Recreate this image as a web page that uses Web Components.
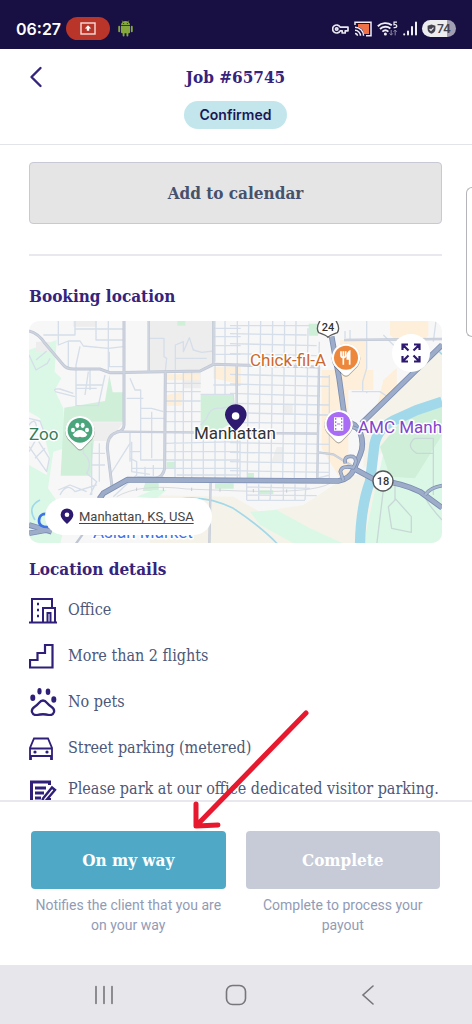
<!DOCTYPE html>
<html lang="en">
<head>
<meta charset="utf-8">
<meta name="viewport" content="width=device-width, initial-scale=1">
<title>Job #65745</title>
<style>
    body {
        margin: 0;
        background: #fff;
    }
</style>
</head>
<body>
<job-screen></job-screen>

<script>
class BaseElement extends HTMLElement {
    constructor() {
        super();
        this.attachShadow({ mode: "open" });
    }

    getTemplate() {
        const template = document.createElement('template');
        template.innerHTML = `
            <style>
                *, *::before, *::after { box-sizing: border-box; }
                svg { display: block; }
                ${this.getStyles()}
            </style>
            ${this.getMarkup()}
        `;

        return template;
    }

    render() {
        this.shadowRoot.appendChild(this.getTemplate().content.cloneNode(true));
    }

    connectedCallback() {
        if (!this.shadowRoot.childElementCount) {
            this.render();
        }
    }
}

class StatusBar extends BaseElement {
    getStyles() {
        return `
            :host {
                display: flex;
                flex: none;
                align-items: center;
                justify-content: space-between;
                height: 49px;
                padding: 8px 16px 0;
                background: #180f42;
                color: #fff;
                font-family: Inter, "Liberation Sans", sans-serif;
            }
            .side { display: flex; align-items: center; gap: 5px; }
            time { font-size: 16px; font-weight: 600; line-height: 24px; }
            .cast {
                display: flex;
                align-items: center;
                justify-content: center;
                width: 44px;
                height: 23px;
                border-radius: 12px;
                background: #b93429;
            }
            .robot { margin-left: 3px; }
            .battery {
                display: flex;
                align-items: center;
                justify-content: center;
                gap: 1px;
                width: 34px;
                height: 17px;
                border-radius: 9px;
                background: linear-gradient(to right, #ededf0 74%, #a19db2 74%);
                color: #454450;
                font-size: 12px;
                font-weight: 600;
            }
        `;
    }

    getMarkup() {
        return `
            <div class="side">
                <time>06:27</time>
                <span class="cast">
                    <svg width="16" height="13" viewBox="0 0 16 13">
                        <rect x="1" y="1" width="14" height="11" fill="none" stroke="#f6dedb" stroke-width="1.4"/>
                        <path d="M8 3.2L11.2 6.6H9.2V8.8H6.8V6.6H4.8Z" fill="#fff"/>
                    </svg>
                </span>
                <svg class="robot" width="15" height="17" viewBox="0 0 15 17" fill="#84a83c">
                    <path d="M3 5.2a4.5 4.2 0 0 1 9 0zM3 6h9v6.3a1 1 0 0 1-1 1H4a1 1 0 0 1-1-1z"/>
                    <path d="M4.2.6l1.2 1.8M10.8.6L9.6 2.4" stroke="#84a83c" stroke-width=".8"/>
                    <path d="M1.2 6.8v4.4M13.8 6.8v4.4M5.6 12.5v3M9.4 12.5v3" stroke="#84a83c" stroke-width="1.9" stroke-linecap="round"/>
                    <circle cx="5.7" cy="3.4" r=".5" fill="#180f42"/><circle cx="9.3" cy="3.4" r=".5" fill="#180f42"/>
                </svg>
            </div>
            <div class="side">
                <svg width="17" height="12" viewBox="0 0 17 12" fill="none" stroke="#e8e6ef" stroke-width="1.7" stroke-linejoin="round">
                    <path d="M8.2 4.2A4 4 0 1 0 8.2 7.8H10.2V10H13.2V7.8H16V4.2Z"/>
                    <circle cx="4.7" cy="6" r="1.2"/>
                </svg>
                <svg width="18" height="16" viewBox="0 0 18 16" fill="none" stroke="#f0eef4" stroke-width="1.5">
                    <path d="M4 3h11v10h-5A8 8 0 0 0 4 6z" fill="#ee7148" stroke="none"/>
                    <path d="M1 4V1.2h16v13.6h-5M1 6.2a8.6 8.6 0 0 1 8.6 8.6M1 9.3a5.5 5.5 0 0 1 5.5 5.5M1 12.4a2.4 2.4 0 0 1 2.4 2.4"/>
                </svg>
                <svg width="21" height="16" viewBox="0 0 21 16" fill="none" stroke="#f0eef4" stroke-width="1.9">
                    <path d="M.8 5.2a11 11 0 0 1 14-1M3 8a8 8 0 0 1 10.4-.6M5.4 10.6a4.6 4.6 0 0 1 6 0"/>
                    <circle cx="8.4" cy="12.9" r="1.5" fill="#f0eef4" stroke="none"/>
                    <path d="M20 1.2h-3v2.6c3-1 4 2.8.8 2.8h-1.2" stroke-width="1.2"/>
                    <path d="M14.2 9v5M12.6 12.4l1.6 1.8 1.6-1.8M18.2 14.4V9M16.6 10.8l1.6-1.8 1.6 1.8" stroke="#8c87a2" stroke-width="1"/>
                </svg>
                <svg width="14" height="15" viewBox="0 0 14 15" stroke="#f0eef4" stroke-width="2" stroke-linecap="round">
                    <path d="M1.2 13.2v.4M5 10.5v3M9 6v7.5M13 1.4v12.1"/>
                </svg>
                <span class="battery">
                    <svg width="9" height="10" viewBox="0 0 9 10">
                        <path d="M4.5.4L8.4 1.8V5C8.4 7.4 6.8 9 4.5 9.8 2.2 9 .6 7.4.6 5V1.8Z" fill="#454450"/>
                        <path d="M2.6 5L4 6.4 6.5 3.7" fill="none" stroke="#ededf0" stroke-width="1.1"/>
                    </svg>
                    74
                </span>
            </div>
        `;
    }
}

class JobHeader extends BaseElement {
    getStyles() {
        return `
            :host {
                display: grid;
                flex: none;
                grid-template-columns: 36px 1fr 36px;
                row-gap: 12px;
                justify-items: center;
                align-items: center;
                padding: 16px 19px 15px 18px;
                border-bottom: 1px solid #e3e3ea;
            }
            button {
                display: flex;
                justify-content: center;
                width: 36px;
                padding: 0;
                border: 0;
                background: none;
            }
            h1 { margin: 0; color: #35237c; font-size: 17px; font-weight: 700; line-height: 24px; }
            .badge {
                grid-column: 2;
                padding: 0 16px;
                border-radius: 14px;
                background: #c2e6ec;
                color: #1d1754;
                font: 600 14px/28px Inter, "Liberation Sans", sans-serif;
            }
        `;
    }

    getMarkup() {
        return `
            <button type="button" aria-label="Back">
                <svg width="14" height="22" viewBox="0 0 14 22" fill="none" stroke="#35237c" stroke-width="2.4" stroke-linecap="round" stroke-linejoin="round"><path d="M11.5 2L2.5 11l9 9"/></svg>
            </button>
            <h1><slot></slot></h1>
            <span class="badge"><slot name="badge"></slot></span>
        `;
    }
}

class AppButton extends BaseElement {
    getStyles() {
        return `
            :host { display: block; }
            button {
                display: block;
                width: 100%;
                padding: 0;
                border: 1px solid transparent;
                border-radius: 4px;
                color: #fff;
                font: inherit;
                font-size: 17px;
                font-weight: 700;
                line-height: 56px;
            }
            :host([kind="outline"]) button { border-color: #c7cad5; background: #e5e5e5; color: #46516c; line-height: 60px; }
            :host([kind="primary"]) button { background: #4fa9c6; }
            :host([kind="muted"]) button { background: #c7cbd7; }
        `;
    }

    getMarkup() {
        return `<button type="button"><slot></slot></button>`;
    }
}

class LocationMap extends BaseElement {
    getStyles() {
        return `
            :host {
                display: block;
                position: relative;
                overflow: hidden;
                border-radius: 10px;
            }
            .map { width: 100%; height: auto; }
            .map text { font-family: Roboto, "Liberation Sans", sans-serif; paint-order: stroke; stroke: #fff; stroke-width: 3px; stroke-linejoin: round; }
            .map .shield { stroke: none; }
            .expand {
                position: absolute;
                top: 13px;
                right: 12px;
                display: grid;
                place-items: center;
                width: 38px;
                height: 38px;
                padding: 0;
                border: 0;
                border-radius: 50%;
                background: #fff;
            }
            .place {
                position: absolute;
                left: 16px;
                bottom: 8px;
                display: flex;
                align-items: center;
                gap: 5px;
                height: 37px;
                padding: 0 18px 0 15px;
                border-radius: 19px;
                background: #fff;
            }
            a { color: #444; font: 13px/20px Roboto, "Liberation Sans", sans-serif; text-underline-offset: 2px; }
        `;
    }

    getMarkup() {
        return `
            <svg class="map" viewBox="0 0 413 222" role="img" aria-label="Map of Manhattan">
                <rect width="413" height="222" fill="#f7f7f7"/>
                <g transform="translate(-9 -6) scale(.33333)" fill="none">
                    <!-- land use -->
                    <path d="M27 105L110 75 104 170 124 190 104 225 130 280 135 400 100 410 84 520 140 600 120 690H27Z" fill="#dbf8e6"/>
                    <path d="M27 290L60 310 90 430 80 480 27 450Z" fill="#f7f7f7"/>
                    <path d="M133 278L255 258 268 180 278 232H310V320H200L222 372 212 482H122Z" fill="#cfefd9"/>
                    <path d="M200 322H310L270 378H222Z" fill="#eeeeee"/>
                    <path d="M386 18H580V155L550 168H386Z" fill="#ededed"/>
                    <path d="M48 80H90V112H48ZM490 170H542V220H490ZM160 18H230V35H160ZM790 270h28v30h-28zM770 396h20v45h-36z" fill="#ededed"/>
                    <path d="M472 18h24v14h-24zM866 26h28v36h-28zM440 440h26v22h-26zM682 474h20v20h-20zM376 502h40v26h-48zM585 505h56v16h-56zM716 526h44v12h-44z" fill="#cfefd9"/>
                    <path d="M436 178H540V196H436ZM580 155H662V208L580 190ZM440 240L485 232V272H440Z" fill="#fdefd9"/>
                    <path d="M542 238H640V320L600 345H542Z" fill="#cfefd9"/>
                    <path d="M905 165H1060V225H985V430L1010 470 960 490 905 400ZM1110 18H1225V60L1180 120 1110 60ZM1090 195L1130 160V220L1070 280ZM960 75H1040V225L970 210Z" fill="#fdefd9"/>
                    <path d="M390 540L640 545 720 590 850 570 940 510 1000 480 1070 480 1070 690H390Z" fill="#f5f3e9"/>
                    <path d="M1266 100L1110 240 1030 330 1030 460 1266 260Z" fill="#f5f3e9"/>
                    <path d="M1096 390L1140 320 1266 275V690H1030L1064 530Z" fill="#dbf8e6"/>
                    <path d="M1080 395L1150 310 1266 275V360L1185 490 1110 485Z" fill="#cfefd9"/>
                    <path d="M690 590L770 585 870 640 980 690H830L720 630Z" fill="#dbf8e6"/>
                    <path d="M240 570L340 550 360 690H210Z" fill="#f7f7f7"/>
                    <path d="M350 545L400 525H440L410 550Z" fill="#dbf8e6"/>
                    <!-- water -->
                    <path d="M1266 260L1190 285 1118 318Q1066 345 1062 400L1050 500Q1022 575 1020 690" stroke="#a2d9ea" stroke-width="31"/>
                    <path d="M480 552Q560 540 640 580Q730 640 775 690M60 555Q20 575 45 615M1258 110l8 8" stroke="#a2d9ea" stroke-width="5"/>
                    <!-- residential streets -->
                    <g stroke="#d5dee9" stroke-width="4" stroke-linejoin="round">
                        <path d="M27 120L48 165 82 145 90 130M48 135L80 108M115 18V90L145 78H180L190 93L265 100 310 95M70 60H165V18M165 42H310M228 18V75H310M265 18V172M145 78V162M180 94L168 150V272H235L255 180M168 220H230M168 172V210H250M205 170L195 240M210 165V225M268 110V155H310M105 228Q100 220 120 222L160 235M105 230L165 245M27 310L60 318 72 350M27 330Q50 300 50 350M27 395L80 470 88 430 50 370 27 410M45 430L75 400"/>
                        <path d="M190 385V415Q220 440 200 475L230 500 210 540M115 525L150 510 200 530M120 540Q140 500 165 530L230 510M215 385V540M238 385V500M255 415H215M255 450H215M330 385L270 480M330 410H362M330 430L350 440V480L280 545M362 280V435H430M362 310H430M362 280H395L430 290M395 290V430M330 190L345 225H362V280M320 250H370M395 310H435"/>
                        <path d="M386 70H432V125L440 130 436 168M466 168V90L490 80V110L508 68 520 105 545 112L580 108M466 130H560M335 380V470L390 478M335 460H430M350 485H430M375 455V500M400 450V500M330 350V440"/>
                        <path d="M465 175V490M490 170V490M515 170V490M550 350V490M585 18V140M585 350V490M585 150V238M615 18V238M615 350V490M660 350V490M436 205H542M436 230H542M436 258H542M436 290H542M436 320H542M436 385L662 380M436 410H662M436 435H662M436 460H662M470 480H662M580 40H662M580 65H662M580 92H662M580 118H662M580 210H662M542 238H640L642 265Q620 280 600 280Q570 275 560 310L542 330"/>
                        <path d="M652 18V490M686 18L682 490M722 18L716 490M758 18L753 490M794 18L788 490M828 18L823 490M864 40L858 490M898 80L894 300M928 180V490M890 490L930 480"/>
                        <path d="M630 32H870M630 56L860 60M630 86L890 92M630 116L890 122M630 178L930 186M630 207L930 214M630 235L900 243M630 265L930 270M630 293L930 300M630 322L900 326M630 383L930 388M630 412L895 416M630 440L930 445M630 467L930 472"/>
                        <path d="M680 505V555M716 508V555M754 508L750 555M790 508V555M825 508V555M858 508L855 555M680 516L870 520M680 540L890 542M680 556H855M940 300H895M975 70V48M990 75V45M1040 18V160L1028 200V230M995 230H1080L1110 250M1040 235V230M1090 60L1130 100M1240 80L1248 18M1250 110L1266 85"/>
                        <path d="M1090 525L1070 690M1125 510V555L1105 575 1115 640 1174 652 1174 605 1125 550M1215 545Q1225 570 1266 615M1240 370H1185Q1155 392 1190 415H1240V370V540" stroke="#c7d8d6"/>
                    </g>
                    <path d="M290 545Q360 505 500 522L662 528Q880 535 930 505" stroke="#d8dadf" stroke-width="3"/>
                    <path d="M350 518v10M430 518v10M515 518v10M600 520v10M700 522v10M800 523v10" stroke="#c6cad1" stroke-width="3"/>
                    <!-- arterials -->
                    <g stroke="#bfc6d3" stroke-width="9">
                        <path d="M27 48Q55 55 75 85L130 150Q140 163 165 162H240L270 173 540 168 580 148 900 156M312 18V330Q312 348 290 352Q262 360 262 400L276 515M436 170L434 460Q430 485 408 490"/>
                        <path d="M386 18V168M580 18V148M290 350L895 356M650 150V350M897 155L892 490M895 412L940 418 1000 455M972 75L1266 72M572 495L568 690M165 690L190 655" stroke-width="7"/>
                        <path d="M27 48Q55 55 75 85L130 150Q140 163 165 162H240L270 173 540 168 580 148 900 156M312 18V330Q312 348 290 352Q262 360 262 400L276 515M436 170L434 460Q430 485 408 490" stroke="#cdd3de" stroke-width="5"/>
                        <path d="M386 18V168M580 18V148M290 350L895 356M650 150V350M897 155L892 490M895 412L940 418 1000 455M972 75L1266 72M572 495L568 690" stroke="#cfd5df" stroke-width="4"/>
                    </g>
                    <!-- highways -->
                    <g stroke="#7b8db3" stroke-width="17" stroke-linejoin="round">
                        <path d="M238 552L250 535 322 494 955 498Q990 492 1002 462L1020 420Q1034 390 1020 350L1004 330 975 315Q960 190 935 65M1266 90L1025 325M1000 460L1060 492Q1150 505 1200 530L1266 578M27 630L95 650M27 655L80 645"/>
                        <path d="M238 552L250 535 322 494 955 498Q990 492 1002 462L1020 420Q1034 390 1020 350L1004 330 975 315Q960 190 935 65M1266 90L1025 325M1000 460L1060 492Q1150 505 1200 530L1266 578M27 630L95 650M27 655L80 645" stroke="#9dacc8" stroke-width="12"/>
                    </g>
                    <path d="M976 445Q970 420 1000 425Q1015 435 1000 458Q965 450 961 470L970 495M1215 540Q1230 518 1266 512M980 330L1020 345" stroke="#7b8db3" stroke-width="11"/>
                    <path d="M976 445Q970 420 1000 425Q1015 435 1000 458Q965 450 961 470L970 495M1215 540Q1230 518 1266 512M980 330L1020 345" stroke="#a7b5ce" stroke-width="7"/>
                    <!-- route shields -->
                    <path d="M902 14H946Q962 38 952 53Q930 60 924 67Q918 60 896 53Q886 38 902 14Z" fill="#fff" stroke="#5c5c5c" stroke-width="4"/>
                    <circle cx="1089" cy="498" r="30" fill="#fff" stroke="#55595c" stroke-width="4"/>
                    <!-- pins -->
                    <g style="filter: drop-shadow(0 2px 2px #0007)">
                        <path d="M180 303A43 43 0 0 1 216 371L188 400Q180 407 172 400L144 371A43 43 0 0 1 180 303Z" fill="#fff"/>
                        <path d="M978 86A42 42 0 0 1 1013 152L986 179Q978 185 970 179L943 152A42 42 0 0 1 978 86Z" fill="#fff"/>
                        <path d="M956 285A42 42 0 0 1 991 351L964 379Q956 386 948 379L921 351A42 42 0 0 1 956 285Z" fill="#fff"/>
                    </g>
                    <circle cx="180" cy="346" r="37" fill="#4ba57c"/>
                    <path d="M180 345Q192 345 202 359Q196 370 180 365Q164 370 158 359Q168 345 180 345Z" fill="#fff"/>
                    <g fill="#fff"><ellipse cx="159" cy="345" rx="6" ry="7"/><ellipse cx="172" cy="331" rx="6" ry="8"/><ellipse cx="188" cy="331" rx="6" ry="8"/><ellipse cx="201" cy="345" rx="6" ry="7"/></g>
                    <circle cx="978" cy="128" r="36" fill="#ed873b"/>
                    <path d="M963 109v12q0 7 7 7t7-7v-12M970 109v40M989 149v-40q-7 4-7 18v5h7" stroke="#fff" stroke-width="5"/>
                    <path d="M984 131v-10q0-8 5-10v20z" fill="#fff"/>
                    <circle cx="956" cy="327" r="36" fill="#a96cf4"/>
                    <path d="M942 307h28v40h-28z" fill="#fff"/>
                    <path d="M947 309v36M965 309v36" stroke="#a96cf4" stroke-width="4" stroke-dasharray="5 5"/>
                    <path d="M951 327h10" stroke="#a96cf4" stroke-width="3"/>
                    <path d="M85 597Q58 593 57 617Q57 637 85 636" stroke="#3e73e8" stroke-width="8"/>
                </g>
                <text x="0" y="119" font-size="17" fill="#357d5b">Zoo</text>
                <text x="165" y="118" font-size="17" fill="#333">Manhattan</text>
                <text x="221" y="45" font-size="17" fill="#cd682b">Chick-fil-A</text>
                <text x="329" y="112" font-size="17" fill="#8046cc">AMC Manh</text>
                <text x="64" y="217" font-size="17" fill="#3e73e8">Asian Market</text>
                <text class="shield" x="299" y="10" font-size="11" font-weight="500" text-anchor="middle" fill="#333">24</text>
                <text class="shield" x="354" y="164" font-size="11" font-weight="500" text-anchor="middle" fill="#333">18</text>
                <path d="M206.5 110Q196 100 196 94A10.8 10.8 0 0 1 217.6 94Q217.6 100 206.5 110Z" fill="#2d1a70"/>
                <circle cx="206.6" cy="95" r="3.8" fill="#fff"/>
            </svg>
            <button class="expand" type="button" aria-label="Expand map">
                <svg width="20" height="20" viewBox="0 0 20 20" fill="none" stroke="#2d1a70" stroke-width="2.2">
                    <path d="M1.5 7V1.5H7M13 1.5h5.5V7M18.5 13v5.5H13M7 18.5H1.5V13M2 2l5.5 5.5M18 2l-5.5 5.5M18 18l-5.5-5.5M2 18l5.5-5.5"/>
                </svg>
            </button>
            <div class="place">
                <svg width="14" height="17" viewBox="0 0 14 17">
                    <path d="M7 16Q.6 10.5.6 6.8A6.4 6.4 0 0 1 13.4 6.8Q13.4 10.5 7 16Z" fill="#2d1a70"/>
                    <circle cx="7" cy="6.8" r="2.3" fill="#fff"/>
                </svg>
                <a href="#map"><slot></slot></a>
            </div>
        `;
    }
}

class DetailRow extends BaseElement {
    getStyles() {
        return `
            :host { display: flex; align-items: center; gap: 11px; min-height: 28px; color: #4d5878; font-size: 16px; line-height: 18px; }
            :host([note]) { align-items: flex-start; }
            .icon { flex: none; width: 28px; height: 28px; }
        `;
    }

    getMarkup() {
        return `<span class="icon"><slot name="icon"></slot></span><span><slot></slot></span>`;
    }
}

class JobAction extends BaseElement {
    getStyles() {
        return `
            :host { display: flex; flex: 1; flex-direction: column; gap: 6px; min-width: 0; }
            p { margin: 0; color: #929bb5; font: 14px/20px Roboto, "Liberation Sans", sans-serif; text-align: center; }
        `;
    }

    getMarkup() {
        return `
            <app-button kind="${this.getAttribute('kind')}">${this.getAttribute('label')}</app-button>
            <p><slot></slot></p>
        `;
    }
}

class SystemNav extends BaseElement {
    getStyles() {
        return `
            :host {
                display: flex;
                flex: none;
                align-items: center;
                justify-content: space-around;
                height: 59px;
                padding: 0 38px;
                background: #e7e6eb;
            }
            button { display: grid; place-items: center; width: 48px; height: 48px; padding: 0; border: 0; background: none; }
            svg { fill: none; stroke: #77767a; stroke-width: 1.6; stroke-linecap: round; }
        `;
    }

    getMarkup() {
        return `
            <button type="button" aria-label="Recent apps"><svg width="20" height="20" viewBox="0 0 20 20"><path d="M2 1.5v17M10 1.5v17M18 1.5v17"/></svg></button>
            <button type="button" aria-label="Home"><svg width="22" height="22" viewBox="0 0 22 22"><rect x="1.5" y="1.5" width="19" height="19" rx="6"/></svg></button>
            <button type="button" aria-label="Back"><svg width="14" height="20" viewBox="0 0 14 20"><path d="M12 1L2 10l10 9"/></svg></button>
        `;
    }
}

class JobScreen extends BaseElement {
    getStyles() {
        return `
            :host {
                display: flex;
                flex-direction: column;
                position: relative;
                height: 100vh;
                overflow: hidden;
                font-family: "DejaVu Serif Condensed", "DejaVu Serif", serif;
            }
            main {
                flex: 1;
                min-height: 0;
                padding: 17px 30px 0 29px;
                overflow-y: auto;
                scrollbar-width: none;
            }
            hr { height: 2px; margin: 30px 0 28px; border: 0; background: #e8e8ee; }
            h2 { margin: 0 0 13px; color: #35237c; font-size: 17px; font-weight: 700; line-height: 24px; }
            location-map + h2 { margin: 14px 0 15px; }
            .details { display: flex; flex-direction: column; gap: 18px; }
            .details svg { fill: none; stroke: #2f1f78; stroke-width: 2; }
            footer {
                display: flex;
                flex: none;
                gap: 20px;
                padding: 29px 32px 30px 31px;
                border-top: 2px solid #e8e8ee;
                background: #fff;
            }
            /* pull-out tab of the system side panel */
            .edge {
                position: absolute;
                top: 187px;
                right: 0;
                width: 6px;
                height: 150px;
                border: 1px solid #b5b5b9;
                border-right: 0;
                border-radius: 6px 0 0 6px;
                background: #fff;
            }
            .pointer { position: absolute; left: 192px; bottom: 194px; pointer-events: none; }
        `;
    }

    getMarkup() {
        return `
            <status-bar></status-bar>
            <job-header>Job #65745<span slot="badge">Confirmed</span></job-header>
            <main>
                <app-button kind="outline">Add to calendar</app-button>
                <hr>
                <h2>Booking location</h2>
                <location-map>Manhattan, KS, USA</location-map>
                <h2>Location details</h2>
                <div class="details">
                    <detail-row>
                        <svg slot="icon" width="28" height="28" viewBox="0 0 28 28"><path d="M0 26.5h28M3 26V3h20v8M14 26V12h12v14M18.5 26v-9h3v9"/><path d="M8 8h2M8 14h2M8 20h2" stroke-width="2.4"/></svg>
                        Office
                    </detail-row>
                    <detail-row>
                        <svg slot="icon" width="28" height="28" viewBox="0 0 28 28"><path d="M1 25.5V18h7.5v-7H16V3h7.5v22.5z" stroke-width="2.2"/></svg>
                        More than 2 flights
                    </detail-row>
                    <detail-row>
                        <svg slot="icon" width="28" height="28" viewBox="0 0 28 28">
                            <path d="M14 12.5C17.5 12.5 18 16 22 18.5C27.500 22 25 27.500 20 27Q14 25.500 8 27C3 27.500.5 22 6 18.500C10 16 10.500 12.500 14 12.500Z" stroke-width="2.3"/>
                            <g fill="#2f1f78" stroke="none"><ellipse cx="10.5" cy="3.2" rx="2.1" ry="3.2"/><ellipse cx="19" cy="3.7" rx="2.3" ry="3.2"/><ellipse cx="3.8" cy="9.8" rx="2.5" ry="3.3"/><ellipse cx="24.8" cy="11.5" rx="2.5" ry="3.2"/></g>
                        </svg>
                        No pets
                    </detail-row>
                    <detail-row>
                        <svg slot="icon" width="28" height="28" viewBox="0 0 28 28"><path d="M1 26V14L5 4.5h14L23 14v12M1 14.5h22M1 22h22M2 26v-4M22 26v-4" stroke-width="1.8"/><circle cx="6" cy="18" r="1.6" fill="#2f1f78" stroke="none"/><circle cx="18" cy="18" r="1.6" fill="#2f1f78" stroke="none"/></svg>
                        Street parking (metered)
                    </detail-row>
                    <detail-row note>
                        <svg slot="icon" width="28" height="28" viewBox="0 0 28 28"><path d="M20.500 5V2H2.500v22H20.500V18M6 8h11M6 13h9M6 18h6" stroke-width="3"/><path d="M14 18.5L23 7.500l3 2.500-9 10.5-4 1.5z" stroke-width="2.4"/></svg>
                        Please park at our office dedicated visitor parking.
                    </detail-row>
                </div>
            </main>
            <footer>
                <job-action kind="primary" label="On my way">Notifies the client that you are on your way</job-action>
                <job-action kind="muted" label="Complete">Complete to process your payout</job-action>
            </footer>
            <system-nav></system-nav>
            <div class="edge"></div>
            <svg class="pointer" width="120" height="120" viewBox="0 0 120 120" fill="none" stroke="#e7192f" stroke-width="5" stroke-linecap="round" stroke-linejoin="round">
                <path d="M114 3L5 115M4 94v22l22-1"/>
            </svg>
        `;
    }
}

customElements.define('status-bar', StatusBar);
customElements.define('job-header', JobHeader);
customElements.define('app-button', AppButton);
customElements.define('location-map', LocationMap);
customElements.define('detail-row', DetailRow);
customElements.define('job-action', JobAction);
customElements.define('system-nav', SystemNav);
customElements.define('job-screen', JobScreen);
</script>
</body>
</html>
